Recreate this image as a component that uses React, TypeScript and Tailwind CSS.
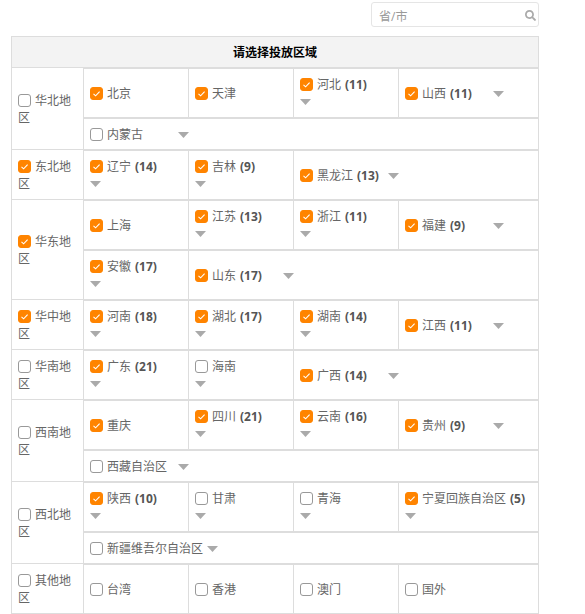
import { FaSearch } from "react-icons/fa";

type C = { n: string; on?: boolean; k?: number; a?: boolean };
type R = { name: string; on?: boolean; rows: { h: string; cells: C[] }[] };

const regions: R[] = [
  { name: "华北地区", rows: [
    { h: "h-[48px]", cells: [{ n: "北京", on: true }, { n: "天津", on: true }, { n: "河北", on: true, k: 11, a: true }, { n: "山西", on: true, k: 11, a: true }] },
    { h: "h-[30px]", cells: [{ n: "内蒙古", a: true }] },
  ] },
  { name: "东北地区", on: true, rows: [
    { h: "h-[48px]", cells: [{ n: "辽宁", on: true, k: 14, a: true }, { n: "吉林", on: true, k: 9, a: true }, { n: "黑龙江", on: true, k: 13, a: true }] },
  ] },
  { name: "华东地区", on: true, rows: [
    { h: "h-[48px]", cells: [{ n: "上海", on: true }, { n: "江苏", on: true, k: 13, a: true }, { n: "浙江", on: true, k: 11, a: true }, { n: "福建", on: true, k: 9, a: true }] },
    { h: "h-[48px]", cells: [{ n: "安徽", on: true, k: 17, a: true }, { n: "山东", on: true, k: 17, a: true }] },
  ] },
  { name: "华中地区", on: true, rows: [
    { h: "h-[48px]", cells: [{ n: "河南", on: true, k: 18, a: true }, { n: "湖北", on: true, k: 17, a: true }, { n: "湖南", on: true, k: 14, a: true }, { n: "江西", on: true, k: 11, a: true }] },
  ] },
  { name: "华南地区", rows: [
    { h: "h-[48px]", cells: [{ n: "广东", on: true, k: 21, a: true }, { n: "海南", a: true }, { n: "广西", on: true, k: 14, a: true }] },
  ] },
  { name: "西南地区", rows: [
    { h: "h-[48px]", cells: [{ n: "重庆", on: true }, { n: "四川", on: true, k: 21, a: true }, { n: "云南", on: true, k: 16, a: true }, { n: "贵州", on: true, k: 9, a: true }] },
    { h: "h-[30px]", cells: [{ n: "西藏自治区", a: true }] },
  ] },
  { name: "西北地区", rows: [
    { h: "h-[48px]", cells: [{ n: "陕西", on: true, k: 10, a: true }, { n: "甘肃", a: true }, { n: "青海", a: true }, { n: "宁夏回族自治区", on: true, k: 5, a: true }] },
    { h: "h-[30px]", cells: [{ n: "新疆维吾尔自治区", a: true }] },
  ] },
  { name: "其他地区", rows: [
    { h: "h-[48px]", cells: [{ n: "台湾" }, { n: "香港" }, { n: "澳门" }, { n: "国外" }] },
  ] },
];

function Box({ on }: { on?: boolean }) {
  return (
    <span className="relative inline-block h-[13px] w-[13px] shrink-0 align-[-2px]">
      <input
        type="checkbox"
        defaultChecked={on}
        className="peer m-0 block h-[13px] w-[13px] appearance-none rounded-[3px] border border-[#999999] bg-white checked:border-[#ff8400] checked:bg-[#ff8400]"
      />
      <svg
        viewBox="0 0 13 13"
        className="pointer-events-none absolute left-0 top-0 hidden h-[13px] w-[13px] peer-checked:block"
      >
        <path d="M3.5 6.8L5.6 8.8L9.6 4.6" fill="none" stroke="#ffffff" strokeWidth="1.1" />
      </svg>
    </span>
  );
}

function Caret() {
  return (
    <svg width="11" height="6" viewBox="0 0 11 6" className="inline-block align-[1px]">
      <path d="M0 0H11L5.5 6Z" fill="#aaaaaa" />
    </svg>
  );
}

function Cell({ c, last }: { c: C; last: boolean }) {
  return (
    <div
      className={
        last
          ? "flex flex-1 items-center px-[6px]"
          : "flex w-[105px] shrink-0 items-center border-r border-[#dddddd] px-[6px]"
      }
    >
      <div className="w-full">
        <label className="mr-1 inline-block min-w-[84px]">
          <Box on={c.on} />
          <span className="ml-1">{c.n}</span>
          {c.k !== undefined && <b className="ml-1 font-bold text-[#555555]">({c.k})</b>}
        </label>
        {c.a && <Caret />}
      </div>
    </div>
  );
}

export default function App() {
  return (
    <div className="w-[539px] pl-[11px] pt-[2px] font-['Open_Sans','Noto_Sans_CJK_SC',sans-serif] text-[12px] leading-[17px] text-[#666666]">
      <div className="relative mb-[9px] ml-auto w-[168px]">
        <input
          placeholder="省/市"
          className="block h-[25px] w-full rounded-[3px] border border-[#e5e5e5] bg-white pl-[7px] pr-6 pt-[3px] text-[12px] outline-none placeholder:text-[#999999]"
        />
        <FaSearch className="absolute right-[3px] top-[8px] text-[11px] text-[#aaaaaa]" />
      </div>
      <div className="border-x border-t border-[#dddddd]">
        <div className="flex h-[31px] items-center justify-center border-b border-[#dddddd] bg-[#f3f3f3] font-bold text-black">
          请选择投放区域
        </div>
        {regions.map((r) => (
          <div key={r.name} className="flex border-b border-[#dddddd]">
            <div className="flex w-[72px] shrink-0 items-center border-r border-[#dddddd] px-[6px]">
              <label>
                <Box on={r.on} />
                <span className="ml-1">{r.name}</span>
              </label>
            </div>
            <div className="min-w-0 flex-1">
              {r.rows.map((row, i) => (
                <div
                  key={i}
                  className={`box-content flex border-t border-[#dddddd] ${row.h} ${i < r.rows.length - 1 ? "border-b" : ""}`}
                >
                  {row.cells.map((c, j) => (
                    <Cell key={c.n} c={c} last={j === row.cells.length - 1} />
                  ))}
                </div>
              ))}
            </div>
          </div>
        ))}
      </div>
    </div>
  );
}
